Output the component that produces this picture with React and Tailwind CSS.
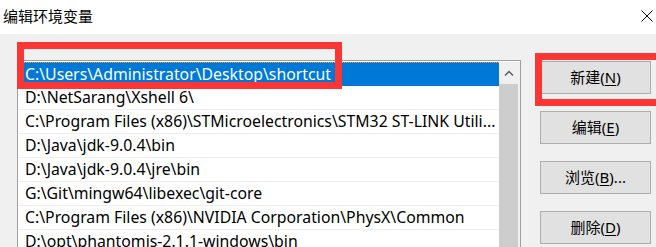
const ROWS = [
  'C:\\Users\\Administrator\\Desktop\\shortcut',
  'D:\\NetSarang\\Xshell 6\\',
  'C:\\Program Files (x86)\\STMicroelectronics\\STM32 ST-LINK Utili...',
  'D:\\Java\\jdk-9.0.4\\bin',
  'D:\\Java\\jdk-9.0.4\\jre\\bin',
  'G:\\Git\\mingw64\\libexec\\git-core',
  'C:\\Program Files (x86)\\NVIDIA Corporation\\PhysX\\Common',
  'D:\\opt\\phantomjs-2.1.1-windows\\bin',
];

const BUTTONS = [
  { label: '新建(', key: 'N', tail: ')' },
  { label: '编辑(', key: 'E', tail: ')' },
  { label: '浏览(', key: 'B', tail: ')...' },
  { label: '删除(', key: 'D', tail: ')' },
];

function Row({ text, selected }) {
  return (
    <div
      className={`h-[24px] pl-[7px] flex items-center whitespace-nowrap overflow-hidden ${
        selected
          ? 'bg-[#0078d7] text-white border-t border-dotted border-[#f0a050]'
          : 'text-black border-b border-[#f0f0f0]'
      }`}
    >
      {text}
    </div>
  );
}

function WinButton({ b }) {
  return (
    <div className="w-[111px] h-[33px] bg-[#e1e1e1] border border-[#adadad] flex items-center justify-center text-[15px] text-black">
      {b.label}<span className="underline underline-offset-2">{b.key}</span>{b.tail}
    </div>
  );
}

export default function App() {
  return (
    <div className="relative w-[656px] h-[247px] overflow-hidden bg-[#f0f0f0] font-['Noto_Sans','Noto_Sans_CJK_SC',sans-serif]">
      {/* Titelleiste */}
      <div className="h-[34px] bg-white flex items-center justify-between pl-[3px] pr-[3px]">
        <span className="text-[15px] text-black font-['Noto_Sans_CJK_SC',sans-serif] -mt-[1px]">编辑环境变量</span>
        <svg width="12" height="12" viewBox="0 0 12 12" className="-mt-[2px]">
          <path d="M0.5 0.5 L11.5 11.5 M11.5 0.5 L0.5 11.5" stroke="#000" strokeWidth="1" />
        </svg>
      </div>

      <div className="flex pl-[17px]">
        {/* Liste */}
        <div className="mt-[26px] w-[504px] h-[200px] bg-white border border-[#a0a0a0] pt-[1px] flex text-[15.8px]">
          <div className="flex-1 min-w-0">
            {ROWS.map((r, i) => (
              <Row key={i} text={r} selected={i === 0} />
            ))}
          </div>
          <div className="w-[21px] bg-[#f0f0f0] flex flex-col pr-[2px]">
            <div className="h-[22px] flex items-center justify-center">
              <svg width="10" height="6" viewBox="0 0 10 6">
                <path d="M1 5.5 L5 1.5 L9 5.5" stroke="#606060" strokeWidth="1.5" fill="none" />
              </svg>
            </div>
            <div className="flex-1 bg-[#cdcdcd]" />
          </div>
        </div>

        {/* Buttons */}
        <div className="mt-[27px] ml-[19px] flex flex-col gap-[17px]">
          {BUTTONS.map((b, i) => (
            <WinButton key={i} b={b} />
          ))}
        </div>
      </div>

      {/* rote Markierungen */}
      <div className="absolute left-[17px] top-[42px] w-[325px] h-[47px] border-[7px] border-[#fc3535]" />
      <div className="absolute left-[535px] top-[53px] w-[130px] h-[53px] border-[7px] border-[#fc3535]" />
    </div>
  );
}
